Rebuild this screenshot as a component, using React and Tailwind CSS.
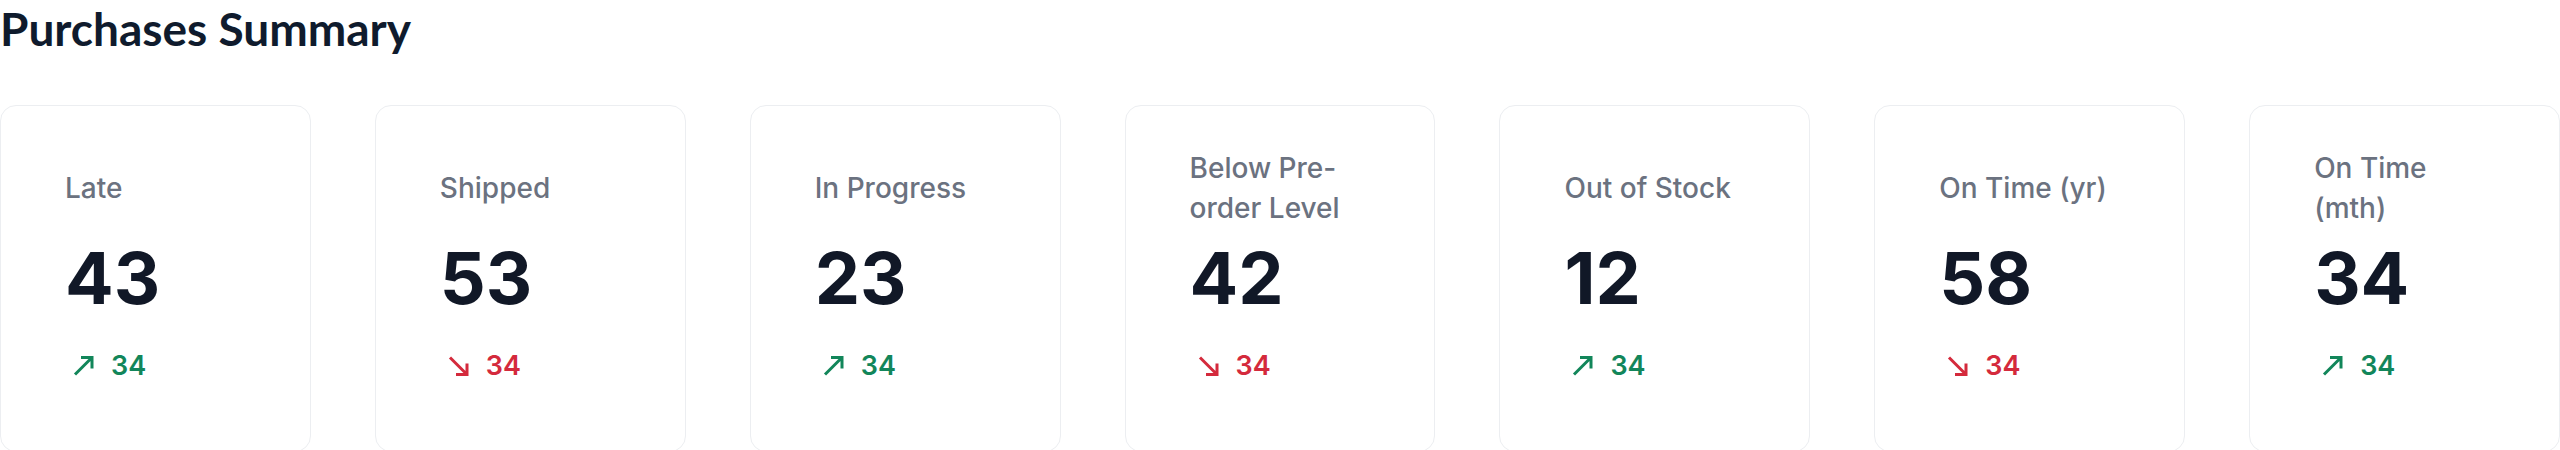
import clsx from "clsx";

const stats = [
  { label: "Late", value: 43, change: 34, up: true },
  { label: "Shipped", value: 53, change: 34, up: false },
  { label: "In Progress", value: 23, change: 34, up: true },
  { label: "Below Pre-order Level", value: 42, change: 34, up: false },
  { label: "Out of Stock", value: 12, change: 34, up: true },
  { label: "On Time (yr)", value: 58, change: 34, up: false },
  { label: "On Time (mth)", value: 34, change: 34, up: true },
];

const TrendArrow = ({ up }) => (
  <svg
    width="29"
    height="36"
    viewBox="0 0 29 36"
    fill="none"
    stroke="currentColor"
    strokeWidth="3"
    strokeLinejoin="miter"
    className="shrink-0"
  >
    {up ? (
      <path d="M10 26.5 L27 9.5 M16 9.5 H27 V20.5" />
    ) : (
      <path d="M10 9.5 L27 26.5 M27 15.5 V26.5 H16" />
    )}
  </svg>
);

const StatCard = ({ label, value, change, up }) => (
  <div className="rounded-2xl border border-[#eceef1] bg-white px-16 pt-[42px] pb-[67px]">
    {/* Titulo */}
    <div className="flex h-20 items-center">
      <p className="text-[28px] leading-[40px] font-medium text-[#6b7280]">
        {label}
      </p>
    </div>

    <p className="mt-[14px] text-[72px] leading-[72px] font-bold text-[#111827]">
      {value}
    </p>

    <div
      className={clsx(
        "mt-[34px] flex h-9 items-center gap-[17px]",
        up ? "text-[#12865a]" : "text-[#d42a3c]"
      )}
    >
      <TrendArrow up={up} />
      <span className="text-[27px] leading-9 font-semibold">{change}</span>
    </div>
  </div>
);

export default function App() {
  return (
    <div className="min-h-screen bg-white font-['Inter',sans-serif]">
      <h1 className="mb-12 font-['Lato',sans-serif] text-[46px] leading-[57px] font-bold text-[#0f1b2d]">
        Purchases Summary
      </h1>

      <div className="grid grid-cols-7 gap-16">
        {stats.map((stat) => (
          <StatCard key={stat.label} {...stat} />
        ))}
      </div>
    </div>
  );
}
